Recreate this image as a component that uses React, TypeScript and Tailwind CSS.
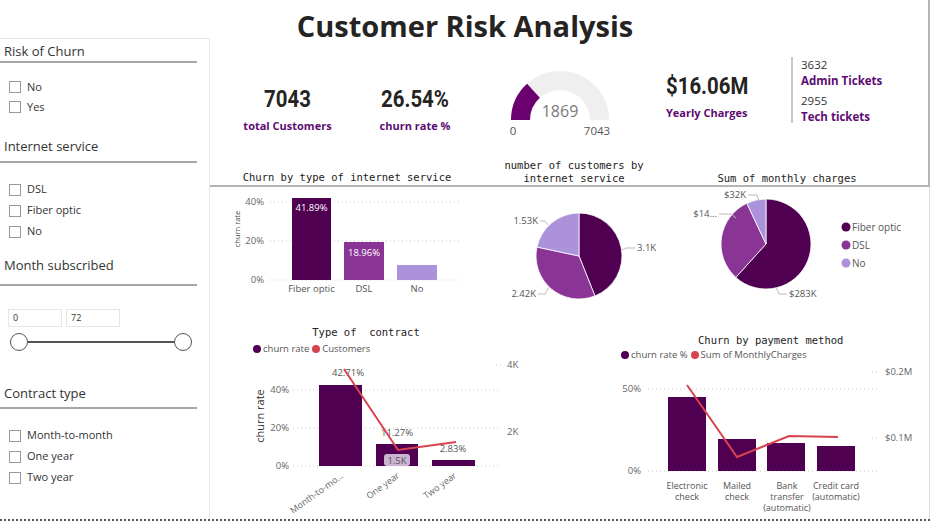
import React from "react"

const DARK = "#4f0050"
const MID = "#8a3595"
const LIGHT = "#ab92da"
const RED = "#d8434f"
const PURPLE_TEXT = "#5d0b70"
const GRID = "#c8c8c8"
const AXIS = "#666666"

function slice(cx: number, cy: number, r: number, f0: number, f1: number) {
  const a0 = f0 * Math.PI * 2 - Math.PI / 2
  const a1 = f1 * Math.PI * 2 - Math.PI / 2
  const x0 = cx + r * Math.cos(a0)
  const y0 = cy + r * Math.sin(a0)
  const x1 = cx + r * Math.cos(a1)
  const y1 = cy + r * Math.sin(a1)
  const large = f1 - f0 > 0.5 ? 1 : 0
  return `M ${cx} ${cy} L ${x0} ${y0} A ${r} ${r} 0 ${large} 1 ${x1} ${y1} Z`
}

function SectionHeader({ title, className }: { title: string; className: string }) {
  return (
    <div className={`w-[197px] border-b-2 border-[#a6a6a6] pl-[4px] text-[13px] leading-[19px] text-[#333] ${className}`}>
      {title}
    </div>
  )
}

function CheckItem({ label }: { label: string }) {
  return (
    <div className="flex h-[21px] items-center gap-[6px] pl-[9px] text-[11px] text-[#333]">
      <span className="h-[12px] w-[12px] border border-[#999] bg-white" />
      {label}
    </div>
  )
}

function Sidebar() {
  return (
    <aside className="flex-1 border-r border-t border-[#e8e8e8] font-['Open_Sans',sans-serif]">
      <SectionHeader title="Risk of Churn" className="mt-[3px]" />
      <div className="mt-[14px] [&>div]:h-[20px]">
        <CheckItem label="No" />
        <CheckItem label="Yes" />
      </div>
      <SectionHeader title="Internet service" className="mt-[20px] pb-[5px]" />
      <div className="mt-[16px]">
        <CheckItem label="DSL" />
        <CheckItem label="Fiber optic" />
        <CheckItem label="No" />
      </div>
      <SectionHeader title="Month subscribed" className="mt-[14px] pb-[9px]" />
      <div className="mt-[23px] flex gap-[4px] pl-[8px]">
        <div className="h-[18px] w-[54px] border border-[#e6e6e6] pl-[4px] text-[9px] leading-[16px] text-[#333]">0</div>
        <div className="h-[18px] w-[54px] border border-[#e6e6e6] pl-[4px] text-[9px] leading-[16px] text-[#333]">72</div>
      </div>
      <div className="ml-[10px] mt-[6px] flex w-[182px] items-center">
        <span className="h-[18px] w-[18px] rounded-full border-[1.5px] border-[#555] bg-white" />
        <span className="h-[2px] flex-1 bg-[#555]" />
        <span className="h-[18px] w-[18px] rounded-full border-[1.5px] border-[#555] bg-white" />
      </div>
      <SectionHeader title="Contract type" className="mt-[33px] pb-[4px]" />
      <div className="mt-[16px]">
        <CheckItem label="Month-to-month" />
        <CheckItem label="One year" />
        <CheckItem label="Two year" />
      </div>
    </aside>
  )
}

function Gauge() {
  const f = 1869 / 7043
  const a = Math.PI * (1 - f)
  const cx = 60
  const cy = 55
  const ox = cx + 49 * Math.cos(a)
  const oy = cy - 49 * Math.sin(a)
  const ix = cx + 30 * Math.cos(a)
  const iy = cy - 30 * Math.sin(a)
  return (
    <svg width="120" height="80" viewBox="0 0 120 80" className="mt-[15px] shrink-0 font-['Open_Sans',sans-serif]">
      <path d="M 11 55 A 49 49 0 0 1 109 55 L 90 55 A 30 30 0 0 0 30 55 Z" fill="#efefef" />
      <path d={`M 11 55 A 49 49 0 0 1 ${ox} ${oy} L ${ix} ${iy} A 30 30 0 0 0 30 55 Z`} fill="#6b006f" />
      <text x="60" y="52" textAnchor="middle" fontSize="16" fill="#7a7a7a">1869</text>
      <text x="13" y="70" textAnchor="middle" fontSize="11.5" fill="#555">0</text>
      <text x="97" y="70" textAnchor="middle" fontSize="11.5" fill="#555">7043</text>
    </svg>
  )
}

function Kpi({ value, label, className }: { value: string; label: string; className: string }) {
  return (
    <div className={`shrink-0 text-center ${className}`}>
      <div className="scale-x-[0.85] font-['Roboto',sans-serif] text-[24px] font-bold leading-[26px] text-[#252423]">{value}</div>
      <div className="mt-[7px] text-[11px] font-bold leading-[14px]" style={{ color: PURPLE_TEXT }}>{label}</div>
    </div>
  )
}

function InternetBars() {
  return (
    <svg width="270" height="123" viewBox="210 187 270 123" className="shrink-0">
      {[202, 241, 280].map((y) => (
        <line key={y} x1="270" x2="462" y1={y} y2={y} stroke={GRID} strokeDasharray="1 3" />
      ))}
      <text x="264" y="205" textAnchor="end" fontSize="9.5" fill={AXIS}>40%</text>
      <text x="264" y="244" textAnchor="end" fontSize="9.5" fill={AXIS}>20%</text>
      <text x="264" y="283" textAnchor="end" fontSize="9.5" fill={AXIS}>0%</text>
      <text x="240" y="229" textAnchor="middle" fontSize="7.5" fill="#444" transform="rotate(-90 240 229)">churn rate</text>
      <rect x="292" y="198" width="39" height="82" fill={DARK} />
      <rect x="344" y="242" width="40" height="38" fill={MID} />
      <rect x="397" y="265" width="40" height="15" fill={LIGHT} />
      <text x="311.5" y="211" textAnchor="middle" fontSize="9.5" fill="#fff">41.89%</text>
      <text x="364" y="256" textAnchor="middle" fontSize="9.5" fill="#fff">18.96%</text>
      <text x="311.5" y="292" textAnchor="middle" fontSize="9.5" fill="#555">Fiber optic</text>
      <text x="364" y="292" textAnchor="middle" fontSize="9.5" fill="#555">DSL</text>
      <text x="417" y="292" textAnchor="middle" fontSize="9.5" fill="#555">No</text>
    </svg>
  )
}

function CustomersPie() {
  const a = 3096 / 7043
  const b = a + 2421 / 7043
  return (
    <svg width="190" height="123" viewBox="480 187 190 123" className="shrink-0">
      <path d={slice(579, 256, 43, 0, a)} fill={DARK} stroke="#fff" strokeWidth="0.8" />
      <path d={slice(579, 256, 43, a, b)} fill={MID} stroke="#fff" strokeWidth="0.8" />
      <path d={slice(579, 256, 43, b, 1)} fill={LIGHT} stroke="#fff" strokeWidth="0.8" />
      <polyline points="622,250 626,248 635,248" fill="none" stroke="#bbb" />
      <polyline points="549,287 545,294 538,294" fill="none" stroke="#bbb" />
      <polyline points="548,225 545,221 540,221" fill="none" stroke="#bbb" />
      <text x="637" y="251" fontSize="9.5" fill="#555">3.1K</text>
      <text x="536" y="297" textAnchor="end" fontSize="9.5" fill="#555">2.42K</text>
      <text x="538" y="224" textAnchor="end" fontSize="9.5" fill="#555">1.53K</text>
    </svg>
  )
}

function ChargesPie() {
  const a = 0.617
  const b = 0.93
  return (
    <svg width="258" height="123" viewBox="670 187 258 123" className="shrink-0">
      <path d={slice(766, 244, 45, 0, a)} fill={DARK} stroke="#fff" strokeWidth="0.8" />
      <path d={slice(766, 244, 45, a, b)} fill={MID} stroke="#fff" strokeWidth="0.8" />
      <path d={slice(766, 244, 45, b, 1)} fill={LIGHT} stroke="#fff" strokeWidth="0.8" />
      <polyline points="759,201 757,195 748,195" fill="none" stroke="#bbb" />
      <polyline points="736,218 731,214 719,214" fill="none" stroke="#bbb" />
      <polyline points="776,287 779,294 787,294" fill="none" stroke="#bbb" />
      <text x="746" y="198" textAnchor="end" fontSize="9.5" fill="#555">$32K</text>
      <text x="717" y="217" textAnchor="end" fontSize="9.5" fill="#555">$14...</text>
      <text x="789" y="297" fontSize="9.5" fill="#555">$283K</text>
      {[
        [227, DARK, "Fiber optic"],
        [245, MID, "DSL"],
        [263, LIGHT, "No"],
      ].map(([y, c, t]) => (
        <g key={t as string}>
          <circle cx="846" cy={y as number} r="4.5" fill={c as string} />
          <text x="852" y={(y as number) + 3.5} fontSize="10" fill="#555">{t as string}</text>
        </g>
      ))}
    </svg>
  )
}

function LegendDot({ color, label }: { color: string; label: string }) {
  return (
    <span className="flex items-center gap-[2px]">
      <span className="h-[8px] w-[8px] rounded-full" style={{ backgroundColor: color }} />
      {label}
    </span>
  )
}

function ContractChart() {
  return (
    <div className="w-[320px] shrink-0 pt-[15px]">
      <div className="pr-[8px] text-center font-['DejaVu_Sans_Mono',monospace] text-[10.5px] leading-[14px] text-[#222]">Type of&nbsp; contract</div>
      <div className="mt-[4px] flex h-[12px] items-center gap-[3px] pl-[43px] text-[9.5px] text-[#555]">
        <LegendDot color={DARK} label="churn rate" />
        <LegendDot color={RED} label="Customers" />
      </div>
      <svg width="320" height="164" viewBox="210 355 320 164" className="block">
        {[390, 428, 466].map((y) => (
          <line key={y} x1="293" x2="500" y1={y} y2={y} stroke={GRID} strokeDasharray="1 3" />
        ))}
        <line x1="496" x2="502" y1="365" y2="365" stroke={GRID} strokeDasharray="1 3" />
        <text x="289" y="393" textAnchor="end" fontSize="9.5" fill={AXIS}>40%</text>
        <text x="289" y="431" textAnchor="end" fontSize="9.5" fill={AXIS}>20%</text>
        <text x="289" y="469" textAnchor="end" fontSize="9.5" fill={AXIS}>0%</text>
        <text x="507" y="368" fontSize="9.5" fill={AXIS}>4K</text>
        <text x="507" y="435" fontSize="9.5" fill={AXIS}>2K</text>
        <text x="264" y="416" textAnchor="middle" fontSize="11" fill="#333" transform="rotate(-90 264 416)">churn rate</text>
        <rect x="319" y="385" width="43" height="81" fill={DARK} />
        <rect x="376" y="444" width="42" height="22" fill={DARK} />
        <rect x="432" y="460" width="43" height="6" fill={DARK} />
        <text x="348" y="376" textAnchor="middle" fontSize="9.5" fill="#555">42.71%</text>
        <text x="397" y="436" textAnchor="middle" fontSize="9.5" fill="#555">11.27%</text>
        <text x="453" y="452" textAnchor="middle" fontSize="9.5" fill="#555">2.83%</text>
        <polyline points="344,369 398,450 456,442" fill="none" stroke={RED} strokeWidth="2" />
        <rect x="384" y="454" width="26" height="12" rx="3" fill="#cbb3d3" />
        <text x="397" y="463.5" textAnchor="middle" fontSize="9.5" fill="#555">1.5K</text>
        <text x="344" y="477" textAnchor="end" fontSize="9" fill="#666" transform="rotate(-36 344 477)">Month-to-mo...</text>
        <text x="400" y="477" textAnchor="end" fontSize="9" fill="#666" transform="rotate(-36 400 477)">One year</text>
        <text x="457" y="477" textAnchor="end" fontSize="9" fill="#666" transform="rotate(-36 457 477)">Two year</text>
      </svg>
    </div>
  )
}

function PaymentChart() {
  const labels: [number, string[]][] = [
    [687, ["Electronic", "check"]],
    [737, ["Mailed", "check"]],
    [787, ["Bank", "transfer", "(automatic)"]],
    [836, ["Credit card", "(automatic)"]],
  ]
  return (
    <div className="ml-[60px] w-[338px] shrink-0 pt-[23px]">
      <div className="pl-[108px] font-['DejaVu_Sans_Mono',monospace] text-[10.5px] leading-[14px] text-[#222]">Churn by payment method</div>
      <div className="mt-[2px] flex h-[12px] items-center gap-[3px] pl-[31px] text-[9.5px] text-[#555]">
        <LegendDot color={DARK} label="churn rate %" />
        <LegendDot color={RED} label="Sum of MonthlyCharges" />
      </div>
      <svg width="338" height="158" viewBox="590 361 338 158" className="block">
        {[389, 471].map((y) => (
          <line key={y} x1="648" x2="878" y1={y} y2={y} stroke={GRID} strokeDasharray="1 3" />
        ))}
        <line x1="872" x2="878" y1="372" y2="372" stroke={GRID} strokeDasharray="1 3" />
        <line x1="872" x2="878" y1="438" y2="438" stroke={GRID} strokeDasharray="1 3" />
        <text x="641" y="392" textAnchor="end" fontSize="9.5" fill={AXIS}>50%</text>
        <text x="641" y="474" textAnchor="end" fontSize="9.5" fill={AXIS}>0%</text>
        <text x="885" y="375" fontSize="9.5" fill={AXIS}>$0.2M</text>
        <text x="885" y="441" fontSize="9.5" fill={AXIS}>$0.1M</text>
        <rect x="668" y="397" width="38" height="74" fill={DARK} />
        <rect x="718" y="439" width="38" height="32" fill={DARK} />
        <rect x="767" y="443" width="38" height="28" fill={DARK} />
        <rect x="817" y="446" width="38" height="25" fill={DARK} />
        <polyline points="687,385 737,457 789,436 838,437" fill="none" stroke={RED} strokeWidth="2" />
        {labels.map(([x, lines]) =>
          lines.map((l, i) => (
            <text key={`${x}-${i}`} x={x} y={489 + i * 11} textAnchor="middle" fontSize="9" fill="#555">{l}</text>
          ))
        )}
      </svg>
    </div>
  )
}

export default function App() {
  return (
    <div className="h-[523px] w-[930px] overflow-hidden bg-white font-['Open_Sans',sans-serif]">
      <div className="flex h-[521px] border-b-2 border-dotted border-[#555]">
        <div className="flex w-[210px] shrink-0 flex-col pt-[38px]">
          <Sidebar />
        </div>
        <main className="flex flex-1 flex-col">
          <section className="h-[187px] border-b-2 border-r-2 border-[#b4b4b4]">
            <h1 className="w-[510px] pt-[6px] text-center text-[29px] font-bold leading-[40px] text-[#252423]">
              Customer Risk Analysis
            </h1>
            <div className="mt-[4px] flex h-[100px] items-start">
              <Kpi value="7043" label="total Customers" className="ml-[30px] mt-[36px] w-[95px]" />
              <Kpi value="26.54%" label="churn rate %" className="ml-[30px] mt-[36px] w-[100px]" />
              <div className="ml-[35px]">
                <Gauge />
              </div>
              <div className="ml-[46px] mt-[23px] w-[100px] shrink-0">
                <div className="origin-left scale-x-[0.85] font-['Roboto',sans-serif] text-[24px] font-bold leading-[26px] text-[#252423]">$16.06M</div>
                <div className="mt-[7px] text-[11px] font-bold leading-[14px]" style={{ color: PURPLE_TEXT }}>Yearly Charges</div>
              </div>
              <div className="ml-[25px] mt-[7px] h-[66px] border-l-2 border-[#c8c8c8] pl-[8px] text-[11.5px] leading-[16px]">
                <div className="text-[#333]">3632</div>
                <div className="font-bold" style={{ color: PURPLE_TEXT }}>Admin Tickets</div>
                <div className="mt-[4px] text-[#333]">2955</div>
                <div className="font-bold" style={{ color: PURPLE_TEXT }}>Tech tickets</div>
              </div>
            </div>
            <div className="flex h-[35px] items-start font-['DejaVu_Sans_Mono',monospace] text-[10.5px] text-[#222]">
              <div className="mt-[20px] w-[274px] text-center leading-[14px]">Churn by type of internet service</div>
              <div className="mt-[9px] w-[180px] text-center leading-[13px]">number of customers by<br />internet service</div>
              <div className="mt-[21px] w-[246px] text-center leading-[14px]">Sum of monthly charges</div>
            </div>
          </section>
          <section className="flex flex-1 flex-col border-r border-[#dddddd] font-['Open_Sans',sans-serif]">
            <div className="flex h-[123px]">
              <InternetBars />
              <CustomersPie />
              <ChargesPie />
            </div>
            <div className="flex flex-1">
              <ContractChart />
              <PaymentChart />
            </div>
          </section>
        </main>
      </div>
    </div>
  )
}
